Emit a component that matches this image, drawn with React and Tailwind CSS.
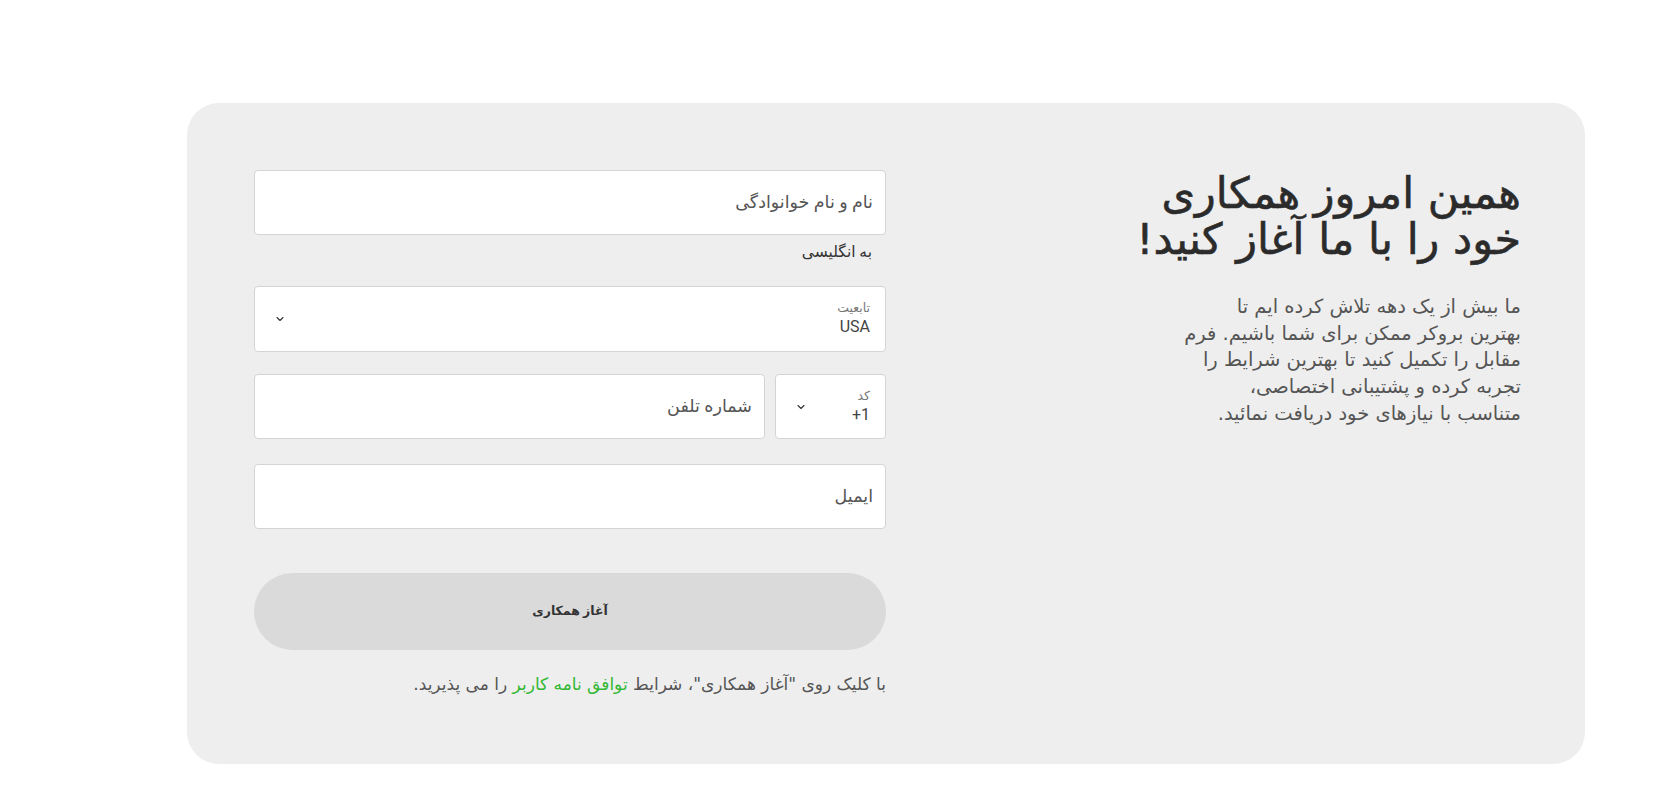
import { ChevronDown } from "lucide-react";

const font = { fontFamily: 'Roboto, "DejaVu Sans", sans-serif' };

function Field({ children, className = "" }) {
  return (
    <div className={`bg-white border border-[#d4d4d4] rounded-[4px] ${className}`}>
      {children}
    </div>
  );
}

export default function App() {
  return (
    <div dir="rtl" className="min-h-[798px] bg-white" style={font}>
      <div className="pt-[103px] pr-[86px] pl-[187px]">
        <div className="bg-[#eeeeee] rounded-[32px] h-[661px] pr-[64px] pl-[67px] pt-[67px] flex justify-between">
          {/* intro text */}
          <div className="w-[420px]">
            <h1 className="text-[43px] leading-[46px] text-[#2b2b2b] [-webkit-text-stroke:0.6px_#2b2b2b] font-['DejaVu_Sans',sans-serif]">
              همین امروز همکاری
              <br />
              خود را با ما آغاز کنید!
            </h1>
            <p className="mt-[32px] text-[19.5px] leading-[26.7px] text-[#555555] font-['DejaVu_Sans',sans-serif]">
              ما بیش از یک دهه تلاش کرده ایم تا
              <br />
              بهترین بروکر ممکن برای شما باشیم. فرم
              <br />
              مقابل را تکمیل کنید تا بهترین شرایط را
              <br />
              تجربه کرده و پشتیبانی اختصاصی،
              <br />
              متناسب با نیازهای خود دریافت نمائید.
            </p>
          </div>

          {/* form */}
          <div className="w-[632px] flex flex-col">
            <Field className="h-[65px] flex items-center px-[12px]">
              <span className="text-[17.5px] text-[#555555]">نام و نام خوانوادگی</span>
            </Field>
            <div className="h-[51px] pr-[14px] pt-[6px] text-[15.5px] text-[#333333]">به انگلیسی</div>

            <Field className="h-[66px] flex items-center justify-between px-[15px]">
              <div className="flex flex-col">
                <span className="text-[12.5px] leading-[16px] text-[#777777]">تابعیت</span>
                <span className="text-[16px] leading-[22px] text-[#444444]">USA</span>
              </div>
              <ChevronDown size={12} strokeWidth={2.25} className="text-[#333333] ml-[4px]" />
            </Field>

            <div className="mt-[22px] flex gap-[10px]">
              <Field className="w-[111px] h-[65px] flex items-center justify-between px-[15px]">
                <div className="flex flex-col">
                  <span className="text-[12.5px] leading-[16px] text-[#777777]">کد</span>
                  <span dir="ltr" className="text-[16px] leading-[22px] text-[#444444] text-right">+1</span>
                </div>
                <ChevronDown size={12} strokeWidth={2.25} className="text-[#333333] ml-[4px]" />
              </Field>
              <Field className="flex-1 h-[65px] flex items-center px-[12px]">
                <span className="text-[17.5px] text-[#555555]">شماره تلفن</span>
              </Field>
            </div>

            <Field className="mt-[25px] h-[65px] flex items-center px-[12px]">
              <span className="text-[17.5px] text-[#555555]">ایمیل</span>
            </Field>

            <button className="mt-[44px] h-[77px] rounded-full bg-[#dadada] text-[12.5px] font-bold text-[#333333]">
              آغاز همکاری
            </button>

            <p className="mt-[22px] text-[17px] text-[#555555] font-['DejaVu_Sans',sans-serif]">
              با کلیک روی "آغاز همکاری"، شرایط{" "}
              <span className="text-[#33b833]">توافق نامه کاربر</span> را می پذیرید.
            </p>
          </div>
        </div>
      </div>
    </div>
  );
}
